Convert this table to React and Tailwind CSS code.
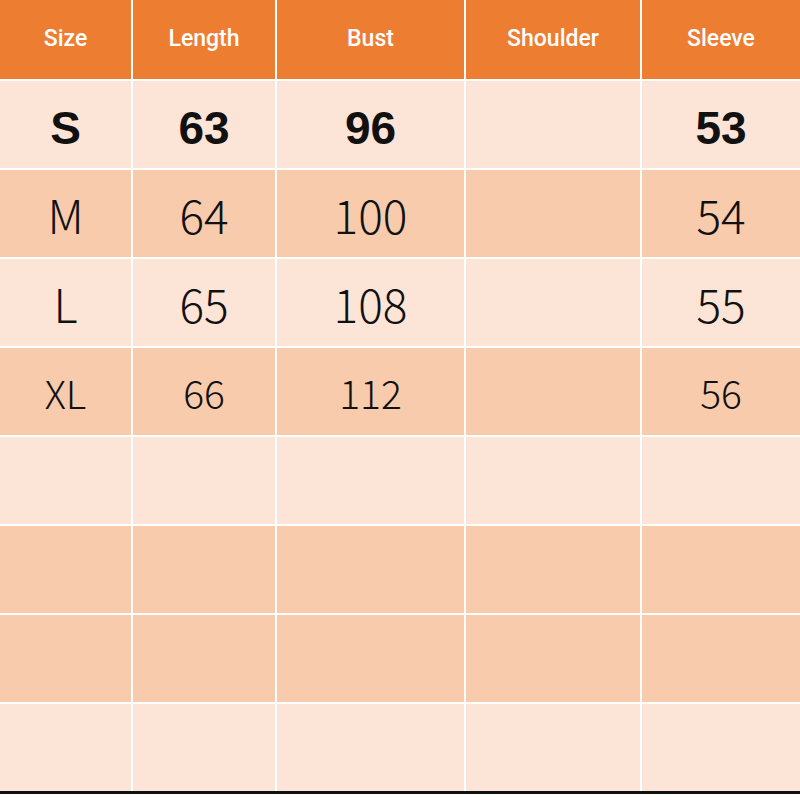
import React from "react";

const headers = ["Size", "Length", "Bust", "Shoulder", "Sleeve"];

// tone: light / dark band, matching the sheet's fill pattern
const rows = [
  { cells: ["S", "63", "96", "", "53"], bold: true, dark: false },
  { cells: ["M", "64", "100", "", "54"], dark: true },
  { cells: ["L", "65", "108", "", "55"], dark: false },
  { cells: ["XL", "66", "112", "", "56"], small: true, dark: true },
  { cells: ["", "", "", "", ""], dark: false },
  { cells: ["", "", "", "", ""], dark: true },
  { cells: ["", "", "", "", ""], dark: true },
  { cells: ["", "", "", "", ""], dark: false },
];

const App = () => {
  return (
    <div className="w-[800px] h-[800px] bg-white">
      <div className="grid grid-cols-[131px_142px_187px_174px_1fr] grid-rows-[79px_repeat(8,87px)] gap-[2px] bg-white border-b-[3px] border-[#111]">
        {headers.map((h) => (
          <div
            key={h}
            className="bg-[#ED7D31] flex items-center justify-center text-white text-[23px] font-medium"
            style={{ fontFamily: 'Roboto, "Noto Sans", sans-serif' }}
          >
            {h}
          </div>
        ))}
        {rows.map((r, i) =>
          r.cells.map((c, j) => (
            <div
              key={`${i}-${j}`}
              className={`flex items-center justify-center text-[#111] ${
                r.dark ? "bg-[#F8CBAD]" : "bg-[#FCE4D6]"
              } ${
                r.bold
                  ? "pt-[7px] font-bold text-[46px]"
                  : r.small
                    ? "pt-[2px] text-[39px]"
                    : "pt-[2px] text-[46px]"
              }`}
              style={{
                fontFamily: r.bold
                  ? '"Liberation Sans", Arial, sans-serif'
                  : '"Noto Sans CJK SC", "Noto Sans", sans-serif',
                fontWeight: r.bold ? 700 : 300,
              }}
            >
              {c}
            </div>
          ))
        )}
      </div>
    </div>
  );
};

export default App;
